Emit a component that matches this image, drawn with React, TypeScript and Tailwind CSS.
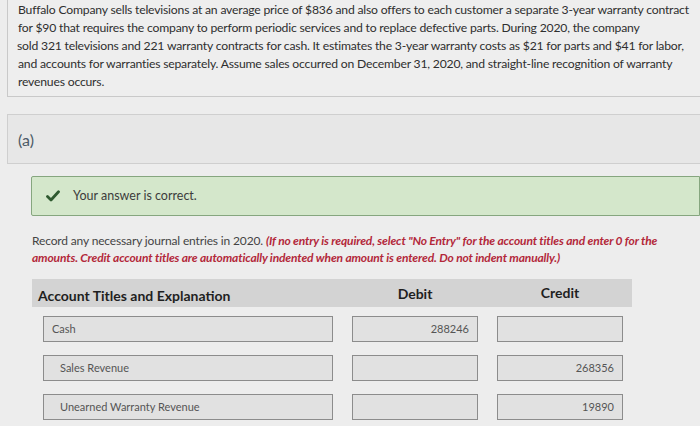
import React from "react";

function Box({ w, value, indent }: { w: string; value?: string; indent?: boolean }) {
  return (
    <div
      className={`${w} h-[26px] border-[1.5px] border-[#8c8c8c] bg-[#e1e1e1] flex items-center text-[11px] text-[#555]`}
    >
      {value !== undefined && (
        <span className={`w-full whitespace-nowrap ${indent ? "pl-[16px]" : "pl-[8px]"} ${/\d/.test(value) ? "text-right pr-[8px]" : ""}`}>{value}</span>
      )}
    </div>
  );
}

export default function App() {
  const rows = [
    { acct: "Cash", indent: false, debit: "288246", credit: "" },
    { acct: "Sales Revenue", indent: true, debit: "", credit: "268356" },
    { acct: "Unearned Warranty Revenue", indent: true, debit: "", credit: "19890" },
  ];
  const para = [
    "Buffalo Company sells televisions at an average price of $836 and also offers to each customer a separate 3-year warranty contract",
    "for $90 that requires the company to perform periodic services and to replace defective parts. During 2020, the company",
    "sold 321 televisions and 221 warranty contracts for cash. It estimates the 3-year warranty costs as $21 for parts and $41 for labor,",
    "and accounts for warranties separately. Assume sales occurred on December 31, 2020, and straight-line recognition of warranty",
    "revenues occurs.",
  ];
  return (
    <div
      className="w-[700px] h-[426px] overflow-hidden bg-[#ededed] text-[#333]"
      style={{ fontFamily: "Lato, 'Open Sans', sans-serif" }}
    >
      {/* question card */}
      <div className="ml-[7px] h-[97px] border-l border-b border-[#c9c9c9] bg-[#eeeeee] pl-[10px] pt-[1px] text-[12.2px] tracking-[-0.2px] leading-[18px] text-[#2f2f2f]">
        {para.map((l, i) => (
          <div key={i} className={`whitespace-nowrap ${i === 2 ? "-ml-[1px]" : ""}`}>{l}</div>
        ))}
      </div>

      {/* part (a) header */}
      <div className="mt-[17px] ml-[7px] h-[50px] border-t border-b border-l border-[#cfcfcf] bg-[#e7e7e7] flex items-center pl-[10px]">
        <span className="text-[16px] text-[#4c5a66] mt-[2px]">(a)</span>
      </div>

      {/* green banner */}
      <div className="mt-[12px] ml-[31px] h-[40px] border border-[#86a67f] bg-[#d4e7cb] flex items-center rounded-l-[2px]">
        <svg width="14" height="12" viewBox="0 0 14 12" className="ml-[14px]">
          <path d="M1.5 6.5 L5 10 L12.5 1.8" fill="none" stroke="#2f5a30" strokeWidth="2.8" strokeLinecap="round" strokeLinejoin="round" />
        </svg>
        <span className="ml-[13px] text-[12.5px] text-[#3c3c3c]">Your answer is correct.</span>
      </div>

      {/* instructions */}
      <div className="mt-[16px] ml-[32px] text-[12px] tracking-[-0.15px] leading-[17px] text-[#444] whitespace-nowrap">
        <div>
          Record any necessary journal entries in 2020.{" "}
          <span className="italic font-bold text-[#b3283a]">
            (If no entry is required, select "No Entry" for the account titles and enter 0 for the
          </span>
        </div>
        <div className="italic font-bold text-[#b3283a]">
          amounts. Credit account titles are automatically indented when amount is entered. Do not indent manually.)
        </div>
      </div>

      {/* table header */}
      <div className="mt-[13px] ml-[32px] w-[600px] h-[28px] bg-[#d3d3d3] flex items-center text-[14px] font-bold text-[#1f1f1f]">
        <div className="w-[310px] pl-[6px] pt-[4px] whitespace-nowrap">Account Titles and Explanation</div>
        <div className="w-[146px] text-center pt-[1px]">Debit</div>
        <div className="w-[144px] text-center -mt-[2px]">Credit</div>
      </div>

      {/* rows */}
      <div className="ml-[43px] mt-[9px] flex flex-col gap-[13px]">
        {rows.map((r) => (
          <div key={r.acct} className="flex items-center">
            <Box w="w-[290px]" value={r.acct} indent={r.indent} />
            <div className="ml-[19px]">
              <Box w="w-[126px]" value={r.debit} />
            </div>
            <div className="ml-[19px]">
              <Box w="w-[126px]" value={r.credit} />
            </div>
          </div>
        ))}
      </div>
    </div>
  );
}
